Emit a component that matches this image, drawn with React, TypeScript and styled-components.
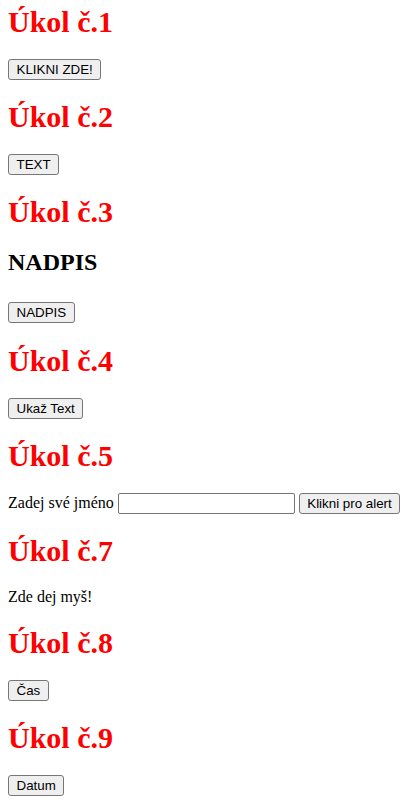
import { useState } from "react";
import { styled, createGlobalStyle } from "styled-components";

const GlobalStyle = createGlobalStyle`
  html, body {
    background: #fff;
  }
  body {
    margin: 0 8px;
    font-family: "Liberation Serif", "Times New Roman", serif;
    font-size: 16px;
    color: #000;
  }
`;

const Page = styled.div`
  display: flow-root;
  padding-top: 5px;
`;

const TaskTitle = styled.h1<{ $first?: boolean }>`
  color: red;
  font-family: "Liberation Serif", "Times New Roman", serif;
  font-size: 30px;
  font-weight: bold;
  margin: ${(p) => (p.$first ? "0" : "0.67em")} 0 0.67em;
`;

const Heading = styled.h2`
  font-size: 24px;
  font-weight: bold;
  margin: 0.83em 0 26px;
`;

const Line = styled.div`
  line-height: normal;
`;

const Text = styled.p`
  margin: 16px 0;
`;

const Button = styled.button`
  font-family: "Liberation Sans", Arial, sans-serif;
  font-size: 13.3333px;
  color: #000;
  background: #efefef;
  border: 1px solid #767676;
  border-radius: 3px;
  padding: 2px 7.5px;
  margin: 0;
  line-height: normal;
  vertical-align: baseline;
`;

const NameInput = styled.input`
  font-family: "Liberation Sans", Arial, sans-serif;
  font-size: 13.3333px;
  border: 1px solid #767676;
  border-radius: 2px;
  padding: 2px 2px;
  width: 171px;
  margin: 0 4px 0 0;
`;

const App = () => {
  const [name, setName] = useState("");

  return (
    <Page>
      <GlobalStyle />
      <TaskTitle $first>Úkol č.1</TaskTitle>
      <Line>
        <Button>KLIKNI ZDE!</Button>
      </Line>

      <TaskTitle>Úkol č.2</TaskTitle>
      <Line>
        <Button>TEXT</Button>
      </Line>

      <TaskTitle>Úkol č.3</TaskTitle>
      <Heading>NADPIS</Heading>
      <Line>
        <Button>NADPIS</Button>
      </Line>

      <TaskTitle>Úkol č.4</TaskTitle>
      <Line>
        <Button>Ukaž Text</Button>
      </Line>

      <TaskTitle>Úkol č.5</TaskTitle>
      <Line>
        Zadej své jméno{" "}
        <NameInput
          type="text"
          value={name}
          onChange={(e: React.ChangeEvent<HTMLInputElement>) =>
            setName(e.target.value)
          }
        />
        <Button onClick={() => alert(name)}>Klikni pro alert</Button>
      </Line>

      <TaskTitle>Úkol č.7</TaskTitle>
      <Text>Zde dej myš!</Text>

      <TaskTitle>Úkol č.8</TaskTitle>
      <Line>
        <Button>Čas</Button>
      </Line>

      <TaskTitle>Úkol č.9</TaskTitle>
      <Line>
        <Button>Datum</Button>
      </Line>
    </Page>
  );
};

export default App;
